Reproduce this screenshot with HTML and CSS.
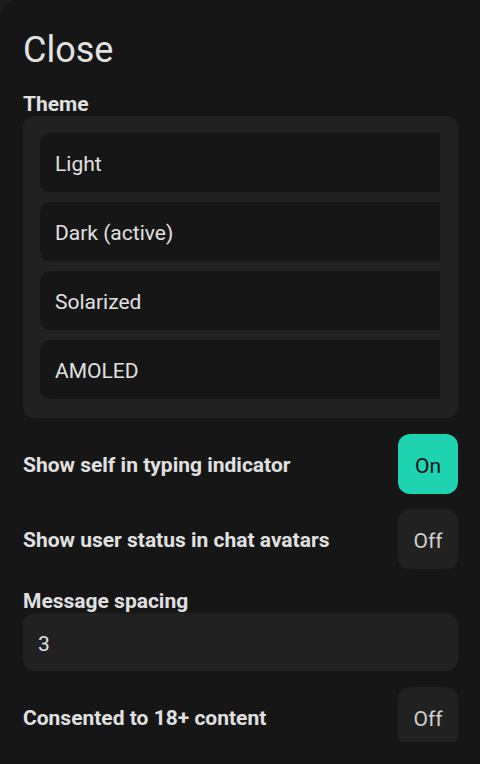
FILE: index.html
```html
<!DOCTYPE html>
<html>
<head>
<meta charset="utf-8">
<link rel="stylesheet" href="styles.css">
</head>
<body>
<div class="modal">
  <div class="scroll">
    <h1 class="title">Close</h1>
    <div class="label">Theme</div>
    <div class="theme-box">
      <div class="theme-list">
        <div class="theme-item">Light</div>
        <div class="theme-item">Dark (active)</div>
        <div class="theme-item">Solarized</div>
        <div class="theme-item">AMOLED</div>
      </div>
    </div>
    <div class="row row-first">
      <span class="label">Show self in typing indicator</span>
      <button class="toggle on">On</button>
    </div>
    <div class="row">
      <span class="label">Show user status in chat avatars</span>
      <button class="toggle">Off</button>
    </div>
    <div class="label label-spacing">Message spacing</div>
    <div class="input">3</div>
    <div class="row">
      <span class="label">Consented to 18+ content</span>
      <button class="toggle">Off</button>
    </div>
  </div>
</div>
</body>
</html>
```

FILE: styles.css
```css
html, body {
  margin: 0;
  padding: 0;
  background: #1d1d1d;
}
body {
  font-family: Roboto, "Noto Sans", sans-serif;
  color: #e0e0e0;
  width: 480px;
  height: 764px;
  overflow: hidden;
}
.modal {
  height: 764px;
  box-sizing: border-box;
  background: #161616;
  border-top-left-radius: 18px;
  padding: 0 22px 22px 23px;
  display: flex;
  flex-direction: column;
}
.scroll {
  flex: 1;
  overflow: hidden;
  display: flex;
  flex-direction: column;
}
.title {
  margin: 28px 0 20px;
  font-size: 36px;
  line-height: 44px;
  font-weight: 400;
  color: #e2e2e2;
}
.label {
  font-size: 21px;
  line-height: 24px;
  font-weight: 700;
  color: #e0e0e0;
}
.theme-box {
  background: #212121;
  border-radius: 12px;
  padding: 17px 18px 19px 17px;
}
.theme-list {
  overflow: hidden;
  display: flex;
  flex-direction: column;
  gap: 10px;
}
.theme-item {
  width: calc(100% + 20px);
  height: 59px;
  box-sizing: border-box;
  background: #161616;
  border-radius: 10px;
  padding: 3px 0 0 15px;
  display: flex;
  align-items: center;
  font-size: 21px;
  color: #e0e0e0;
}
.row {
  display: flex;
  align-items: center;
  justify-content: space-between;
  margin-top: 15px;
  flex-shrink: 0;
}
.row-first {
  margin-top: 16px;
}
.row .label {
  padding-top: 2px;
}
.toggle {
  width: 60px;
  height: 60px;
  border: none;
  border-radius: 12px;
  background: #212121;
  color: #d0d0d0;
  font-family: Roboto, "Noto Sans", sans-serif;
  font-size: 21px;
  padding: 3px 0 0;
}
.toggle.on {
  background: #1dd3b0;
  color: #111111;
}
.label-spacing {
  margin-top: 20px;
}
.input {
  height: 58px;
  box-sizing: border-box;
  background: #212121;
  border-radius: 12px;
  padding: 3px 0 0 15px;
  display: flex;
  align-items: center;
  font-size: 21px;
  color: #e0e0e0;
  flex-shrink: 0;
  margin-bottom: 1px;
}
```
